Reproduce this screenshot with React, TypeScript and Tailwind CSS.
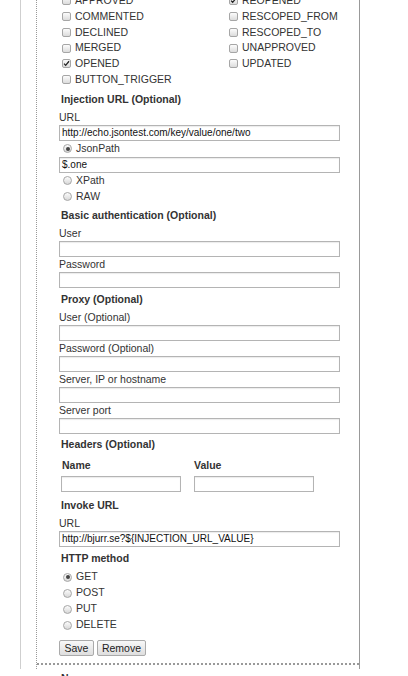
const font = { fontFamily: '"Liberation Sans", Arial, sans-serif' };

const leftEvents = ["APPROVED", "COMMENTED", "DECLINED", "MERGED", "OPENED", "BUTTON_TRIGGER"];
const rightEvents = ["REOPENED", "RESCOPED_FROM", "RESCOPED_TO", "UNAPPROVED", "UPDATED"];
const checkedEvents = ["OPENED", "REOPENED"];

function Checkbox({ checked }: { checked?: boolean }) {
  return (
    <span className="relative inline-block h-[9px] w-[9px] shrink-0 rounded-[2px] border border-[#a6a6a6] bg-gradient-to-b from-[#fcfcfc] to-[#dcdcdc]">
      {checked && (
        <svg viewBox="0 0 10 10" className="absolute left-[0px] top-[0px] h-[7px] w-[7px]">
          <path d="M1.5 5.2l2.3 2.4L8.6 1.8" fill="none" stroke="#222" strokeWidth={1.8} />
        </svg>
      )}
    </span>
  );
}

function Radio({ checked }: { checked?: boolean }) {
  return (
    <span className="flex h-[9px] w-[9px] shrink-0 items-center justify-center rounded-full border border-[#a6a6a6] bg-gradient-to-b from-[#fcfcfc] to-[#d8d8d8]">
      {checked && <span className="h-[4px] w-[4px] rounded-full bg-[#444]" />}
    </span>
  );
}

function CheckRow({ label }: { label: string }) {
  return (
    <div className="flex h-[15.75px] items-center gap-[4px] pl-[3px]">
      <Checkbox checked={checkedEvents.includes(label)} />
      <span>{label}</span>
    </div>
  );
}

function RadioRow({ label, checked }: { label: string; checked?: boolean }) {
  return (
    <div className="flex h-[16px] items-center gap-[4px] pl-[4px]">
      <Radio checked={checked} />
      <span>{label}</span>
    </div>
  );
}

function Heading({ children, className = "" }: { children: React.ReactNode; className?: string }) {
  return <div className={`h-[16px] pl-[2px] font-bold leading-[16px] ${className}`}>{children}</div>;
}

function TextInput({ value = "", className = "w-[281px]" }: { value?: string; className?: string }) {
  return (
    <div
      className={`h-[16px] border border-[#b4b4b4] bg-white pl-[2px] text-[10px] leading-[14px] text-[#111] shadow-[inset_0_1px_1px_rgba(0,0,0,0.08)] ${className}`}
    >
      {value}
    </div>
  );
}

function Field({ label, value }: { label: string; value?: string }) {
  return (
    <div>
      <div className="h-[15px] leading-[15px]">{label}</div>
      <TextInput value={value} />
    </div>
  );
}

function Button({ children, className = "" }: { children: React.ReactNode; className?: string }) {
  return (
    <button
      type="button"
      className={`h-[16px] rounded-[2px] border border-[#aaa] bg-gradient-to-b from-[#f8f8f8] to-[#dedede] text-[10.5px] leading-[14px] text-[#222] ${className}`}
    >
      {children}
    </button>
  );
}

export default function App() {
  return (
    <div className="h-[676px] w-[408px] overflow-hidden bg-white pl-[20px] text-[10.5px] text-[#333]" style={font}>
      <div className="h-full border-l border-[#cfcfcf] pl-[15px]">
        <div className="h-full w-[324px] border-x border-[#999] [border-left-style:dotted]">
          <div className="border-b-2 border-dotted border-[#999] pb-[7px] pl-[22px]">
            <div className="-mt-[7px] grid grid-cols-[167px_1fr]">
              <div>
                {leftEvents.map((e) => (
                  <CheckRow key={e} label={e} />
                ))}
              </div>
              <div>
                {rightEvents.map((e) => (
                  <CheckRow key={e} label={e} />
                ))}
              </div>
            </div>

            <Heading className="mt-[3px]">Injection URL (Optional)</Heading>
            <div className="mt-[3px]">
              <Field label="URL" value="http://echo.jsontest.com/key/value/one/two" />
            </div>
            <RadioRow label="JsonPath" checked />
            <TextInput value="$.one" />
            <RadioRow label="XPath" />
            <RadioRow label="RAW" />

            <Heading className="mt-[2.5px]">Basic authentication (Optional)</Heading>
            <div className="mt-[3px]">
              <Field label="User" />
              <Field label="Password" />
            </div>

            <Heading className="mt-[3px]">Proxy (Optional)</Heading>
            <div className="mt-[3px]">
              <Field label="User (Optional)" />
              <Field label="Password (Optional)" />
              <Field label="Server, IP or hostname" />
              <Field label="Server port" />
            </div>

            <Heading className="mt-[2px]">Headers (Optional)</Heading>
            <div className="mt-[5px] flex gap-[13px] pl-[2px]">
              <div className="w-[120px]">
                <div className="h-[16px] pl-[1px] font-bold leading-[16px]">Name</div>
                <TextInput className="mt-[3px] w-[120px]" />
              </div>
              <div className="w-[120px]">
                <div className="h-[16px] font-bold leading-[16px]">Value</div>
                <TextInput className="mt-[3px] w-[120px]" />
              </div>
            </div>

            <Heading className="mt-[5px]">Invoke URL</Heading>
            <div className="mt-[3px]">
              <Field label="URL" value="http://bjurr.se?${INJECTION_URL_VALUE}" />
            </div>

            <Heading className="mt-[3px]">HTTP method</Heading>
            <div className="mt-[3px]">
              <RadioRow label="GET" checked />
              <RadioRow label="POST" />
              <RadioRow label="PUT" />
              <RadioRow label="DELETE" />
            </div>

            <div className="mt-[7px] flex gap-[3px]">
              <Button className="w-[35px]">Save</Button>
              <Button className="w-[49px]">Remove</Button>
            </div>
          </div>

          <div className="pl-[22px] pt-[5px]">
            <Heading>Name</Heading>
          </div>
        </div>
      </div>
    </div>
  );
}
